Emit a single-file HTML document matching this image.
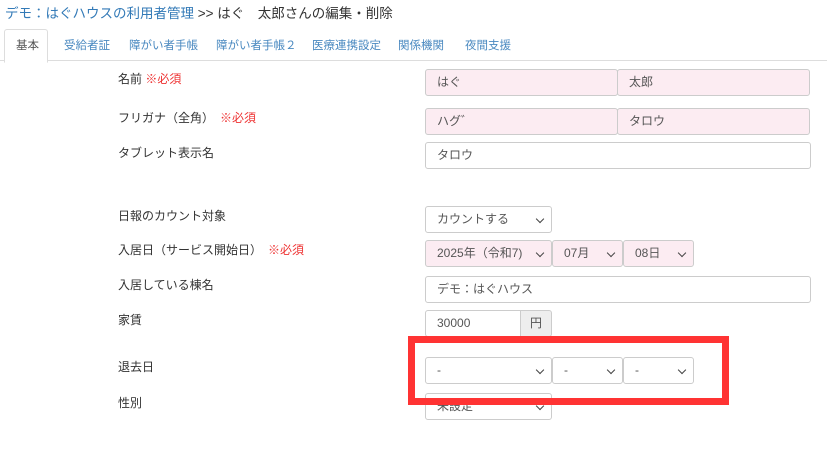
<!DOCTYPE html>
<html><head><meta charset="utf-8"><style>
body{margin:0;width:827px;height:466px;overflow:hidden;background:#fff;font-family:"Liberation Sans","Noto Sans CJK JP",sans-serif;color:#333;position:relative}
.a{position:absolute}
.t{font-size:13.5px;left:5px;top:2px;white-space:nowrap}
.tabs{left:0;top:60px;width:827px;border-top:1px solid #ddd}
.tab{position:absolute;top:37px;font-size:11.5px;color:#4a89c0;white-space:nowrap}
.act{left:4px;top:29px;width:42px;height:32px;border:1px solid #ddd;border-bottom:1px solid #fff;border-radius:3px 3px 0 0;background:#fff}
.l{font-size:12px;left:118px;white-space:nowrap}
.r{color:#e33}
.i{box-sizing:border-box;border:1px solid #ccc;border-radius:3px;height:27px;font-size:12px;line-height:25px;padding-left:11px;color:#555;background:#fff;white-space:nowrap}
.p{background:#fcecf2}
.s:after{content:"";position:absolute;right:8px;top:9px;width:5px;height:5px;border-right:1.5px solid #444;border-bottom:1.5px solid #444;transform:rotate(45deg)}
</style></head><body>
<div class="a t"><span style="color:#337ab7">デモ：はぐハウスの利用者管理</span> &gt;&gt; はぐ　太郎さんの編集・削除</div>
<div class="a tabs"></div>
<div class="a act"></div>
<div class="tab" style="left:16px;color:#555">基本</div>
<div class="tab" style="left:64px">受給者証</div>
<div class="tab" style="left:129px">障がい者手帳</div>
<div class="tab" style="left:216px">障がい者手帳２</div>
<div class="tab" style="left:312px">医療連携設定</div>
<div class="tab" style="left:398px">関係機関</div>
<div class="tab" style="left:465px">夜間支援</div>

<div class="a l" style="top:70px">名前 <span class="r">※必須</span></div>
<div class="a l" style="top:109px">フリガナ（全角）　<span class="r">※必須</span></div>
<div class="a l" style="top:144px">タブレット表示名</div>
<div class="a l" style="top:207px">日報のカウント対象</div>
<div class="a l" style="top:241px">入居日（サービス開始日）　<span class="r">※必須</span></div>
<div class="a l" style="top:276px">入居している棟名</div>
<div class="a l" style="top:311px">家賃</div>
<div class="a l" style="top:358px">退去日</div>
<div class="a l" style="top:394px">性別</div>

<div class="a i p" style="left:425px;top:69px;width:193px">はぐ</div>
<div class="a i p" style="left:617px;top:69px;width:193px">太郎</div>
<div class="a i p" style="left:425px;top:108px;width:193px">ハグ゛</div>
<div class="a i p" style="left:617px;top:108px;width:193px">タロウ</div>
<div class="a i" style="left:425px;top:142px;width:386px">タロウ</div>
<div class="a i s" style="left:425px;top:206px;width:127px">カウントする</div>
<div class="a i s p" style="left:425px;top:240px;width:127px">2025年（令和7)</div>
<div class="a i s p" style="left:552px;top:240px;width:71px">07月</div>
<div class="a i s p" style="left:623px;top:240px;width:71px">08日</div>
<div class="a i" style="left:425px;top:276px;width:386px">デモ：はぐハウス</div>
<div class="a i" style="left:425px;top:310px;width:96px;border-radius:3px 0 0 3px">30000</div>
<div class="a i" style="left:520px;top:310px;width:32px;background:#eee;padding-left:9px;border-radius:0 3px 3px 0">円</div>
<div class="a i s" style="left:425px;top:357px;width:127px">-</div>
<div class="a i s" style="left:552px;top:357px;width:71px">-</div>
<div class="a i s" style="left:623px;top:357px;width:71px">-</div>
<div class="a i s" style="left:425px;top:393px;width:127px">未設定</div>
<div class="a" style="left:408px;top:336px;width:307px;height:55px;border:7px solid #f33"></div>
</body></html>
